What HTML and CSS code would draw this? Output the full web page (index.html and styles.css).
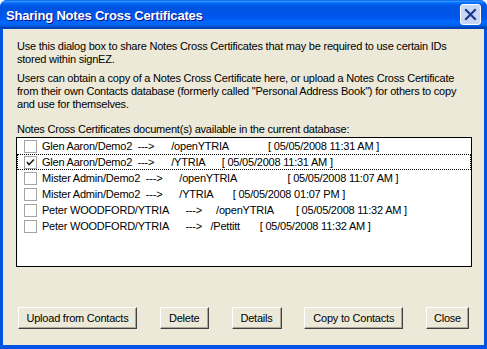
FILE: index.html
```html
<!DOCTYPE html>
<html>
<head>
<meta charset="utf-8">
<link rel="stylesheet" href="styles.css">
</head>
<body>
<div class="window">
  <div class="titlebar">
    <span class="title">Sharing Notes Cross Certificates</span>
    <span class="close">
      <svg width="13" height="13" viewBox="0 0 13 13"><path d="M2 2 L11 11 M11 2 L2 11" stroke="#1a3a8c" stroke-width="2.2" stroke-linecap="square"/></svg>
    </span>
  </div>
  <div class="client">
    <p class="para">Use this dialog box to share Notes Cross Certificates that may be required to use certain IDs<br>stored within signEZ.</p>
    <p class="para para2">Users can obtain a copy of a Notes Cross Certificate here, or upload a Notes Cross Certificate<br>from their own Contacts database (formerly called "Personal Address Book") for others to copy<br>and use for themselves.</p>
    <div class="label">Notes Cross Certificates document(s) available in the current database:</div>
    <div class="listbox">
      <div class="row"><span class="cb"></span><span class="txt">Glen Aaron/Demo2  --->      /openYTRIA              [ 05/05/2008 11:31 AM ]</span></div>
      <div class="row focus"><span class="cb checked"><svg width="11" height="11" viewBox="0 0 11 11"><path d="M2 5 L4 7.5 L9 2.5" fill="none" stroke="#222" stroke-width="1.6"/></svg></span><span class="txt">Glen Aaron/Demo2  --->      /YTRIA      [ 05/05/2008 11:31 AM ]</span></div>
      <div class="row"><span class="cb"></span><span class="txt">Mister Admin/Demo2  --->      /openYTRIA                  [ 05/05/2008 11:07 AM ]</span></div>
      <div class="row"><span class="cb"></span><span class="txt">Mister Admin/Demo2  --->      /YTRIA       [ 05/05/2008 01:07 PM ]</span></div>
      <div class="row"><span class="cb"></span><span class="txt">Peter WOODFORD/YTRIA      --->     /openYTRIA        [ 05/05/2008 11:32 AM ]</span></div>
      <div class="row"><span class="cb"></span><span class="txt">Peter WOODFORD/YTRIA      --->   /Pettitt       [ 05/05/2008 11:32 AM ]</span></div>
    </div>
    <div class="buttons">
      <button class="btn btn-upload">Upload from Contacts</button>
      <button class="btn btn-delete">Delete</button>
      <button class="btn btn-details">Details</button>
      <button class="btn btn-copy">Copy to Contacts</button>
      <button class="btn btn-close">Close</button>
    </div>
  </div>
</div>
</body>
</html>
```
FILE: styles.css
```css
html, body {
  margin: 0;
  padding: 0;
  background: #ffffff;
}
body {
  width: 487px;
  height: 349px;
  overflow: hidden;
}
.window {
  width: 487px;
  height: 349px;
  box-sizing: border-box;
  display: flex;
  flex-direction: column;
  background: #0054e3;
  border-radius: 7px 7px 0 0;
  overflow: hidden;
}
.titlebar {
  height: 29px;
  flex: none;
  display: flex;
  align-items: center;
  justify-content: space-between;
  padding: 0 6px 0 6px;
  background: linear-gradient(to bottom, #0058ee 0%, #3593ff 4%, #288eff 6%, #127dff 8%, #036ffc 10%, #0262ee 14%, #0057e5 20%, #0054e3 24%, #0055eb 56%, #005bf5 66%, #026afe 76%, #0062ef 86%, #0052d6 92%, #0040ab 94%, #0046c0 100%);
}
.title {
  font-family: "Liberation Sans", Arial, sans-serif;
  font-weight: bold;
  font-size: 13px;
  letter-spacing: -0.2px;
  color: #ffffff;
  text-shadow: 1px 1px #0f1089;
  padding-top: 1px;
}
.close {
  width: 21px;
  height: 21px;
  box-sizing: border-box;
  border: 1px solid #ffffff;
  border-radius: 3px;
  background: #c9d6f4;
  display: flex;
  align-items: center;
  justify-content: center;
  margin-right: 0;
}
.client {
  flex: 1;
  margin: 0 3px 4px 3px;
  background: #ece9d8;
  padding: 11px 12px 0 13px;
  font-family: "Liberation Sans", Arial, sans-serif;
  font-size: 11px;
  letter-spacing: -0.22px;
  color: #000000;
  display: flex;
  flex-direction: column;
}
.para {
  margin: 0 0 6px 1px;
  line-height: 13px;
  white-space: nowrap;
}
.para2 {
  margin-bottom: 12px;
}
.label {
  line-height: 13px;
  margin-left: 1px;
  white-space: nowrap;
}
.listbox {
  margin-top: 1px;
  width: 456px;
  height: 130px;
  box-sizing: border-box;
  border: 1px solid #000000;
  background: #ffffff;
}
.row {
  height: 16px;
  box-sizing: border-box;
  display: flex;
  align-items: center;
  padding-left: 6px;
  border: 1px solid transparent;
}
.row.focus {
  border: 1px dotted #000000;
}
.cb {
  width: 13px;
  height: 13px;
  box-sizing: border-box;
  border: 1px solid #a4a4a0;
  background: #ffffff;
  flex: none;
  display: flex;
  align-items: center;
  justify-content: center;
}
.txt {
  margin-left: 5px;
  white-space: pre;
  line-height: 14px;
}
.buttons {
  margin-top: 40px;
  display: flex;
  justify-content: space-between;
  padding: 0 3px 0 2px;
}
.btn {
  height: 22px;
  box-sizing: border-box;
  padding: 0;
  font-family: "Liberation Sans", Arial, sans-serif;
  font-size: 11px;
  letter-spacing: -0.22px;
  color: #000000;
  background: #ece9d8;
  border: 1px solid;
  border-color: #ffffff #404040 #404040 #ffffff;
  box-shadow: inset -1px -1px #aca899;
  border-radius: 0;
}
.btn-upload { width: 119px; }
.btn-delete { width: 49px; }
.btn-details { width: 50px; }
.btn-copy { width: 99px; }
.btn-close { width: 43px; }
```
